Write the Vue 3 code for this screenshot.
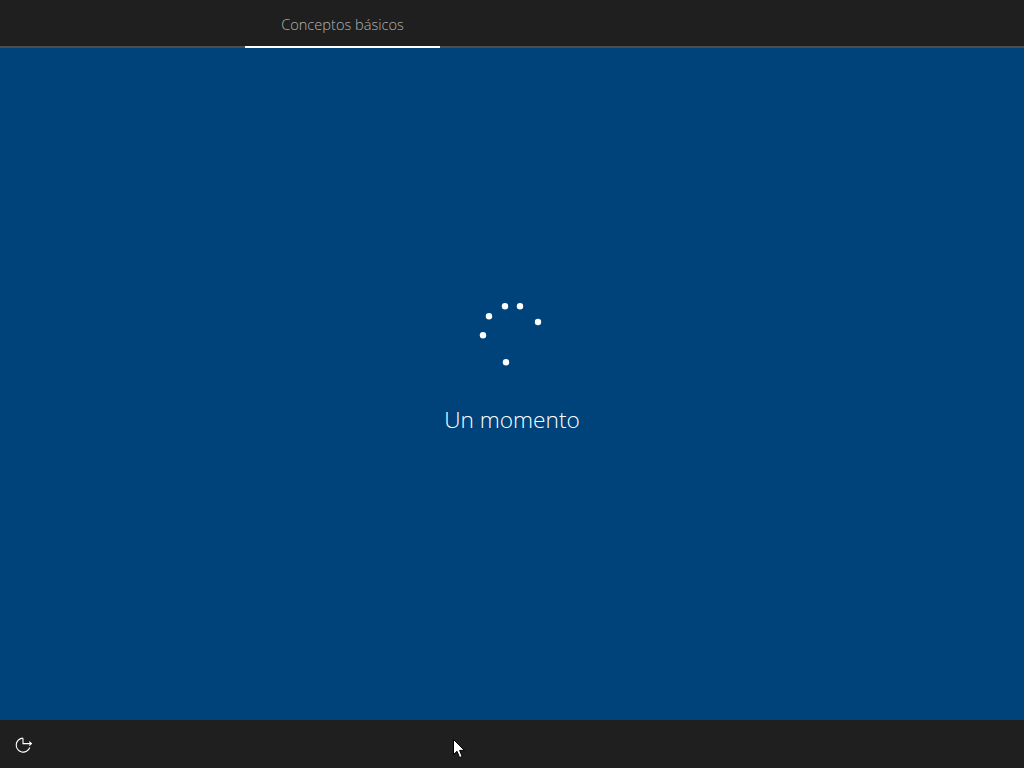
<script setup>
const dots = [
  [63, 6.2], [78, 6.2], [96, 22], [47, 16.2], [41, 35.2], [64, 62.2]
]
</script>

<template>
  <div class="screen">
    <header class="top">
      <div class="tab">Conceptos básicos</div>
    </header>
    <main class="main">
      <svg class="spinner" width="140" height="70" viewBox="0 0 140 70">
        <circle v-for="(d, i) in dots" :key="i" :cx="d[0]" :cy="d[1]" r="3.2" fill="#fff" />
      </svg>
      <div class="label">Un momento</div>
    </main>
    <footer class="bottom">
      <svg class="ease" width="18" height="18" viewBox="0 0 18 18" fill="none" stroke="#fff" stroke-width="1.1">
        <path d="M14.8 11.5a7 7 0 1 1-6.8-9.4" />
        <path d="M8 2.2V7.6h8.4" />
        <path d="M14.2 5.6l2.2 2-2.2 2" />
      </svg>
      <svg class="cursor" width="13" height="20" viewBox="0 0 13 20">
        <path d="M0.5 0.5V15.5L4 12.3L6.6 18.6L9.2 17.5L6.6 11.4H11.5Z" fill="#fff" stroke="#000" stroke-width="1" />
      </svg>
    </footer>
  </div>
</template>

<style scoped>
.screen {
  width: 1024px;
  height: 768px;
  display: flex;
  flex-direction: column;
  background: #00437a;
  font-family: "Open Sans", "Noto Sans", sans-serif;
  overflow: hidden;
}
.top {
  height: 46px;
  background: #1f1f1f;
  border-bottom: 2px solid #4c4c4c;
  padding-left: 245px;
  display: flex;
  flex-shrink: 0;
}
.tab {
  width: 195px;
  height: 48px;
  box-sizing: border-box;
  border-bottom: 2px solid #fff;
  padding-top: 14px;
  text-align: center;
  font-size: 14.6px;
  font-weight: 300;
  line-height: 20px;
  color: #b4b4b4;
}
.main {
  flex: 1;
  display: flex;
  flex-direction: column;
  align-items: center;
  padding-top: 252px;
}
.spinner {
  display: block;
}
.label {
  margin-top: 35px;
  font-size: 22.7px;
  font-weight: 300;
  line-height: 30px;
  color: #fff;
}
.bottom {
  position: relative;
  height: 48px;
  background: #1f1f1f;
  flex-shrink: 0;
  display: flex;
  align-items: center;
  padding-left: 15px;
}
.ease {
  display: block;
  margin-top: 2px;
}
.cursor {
  position: absolute;
  left: 453px;
  top: 19px;
}
</style>
